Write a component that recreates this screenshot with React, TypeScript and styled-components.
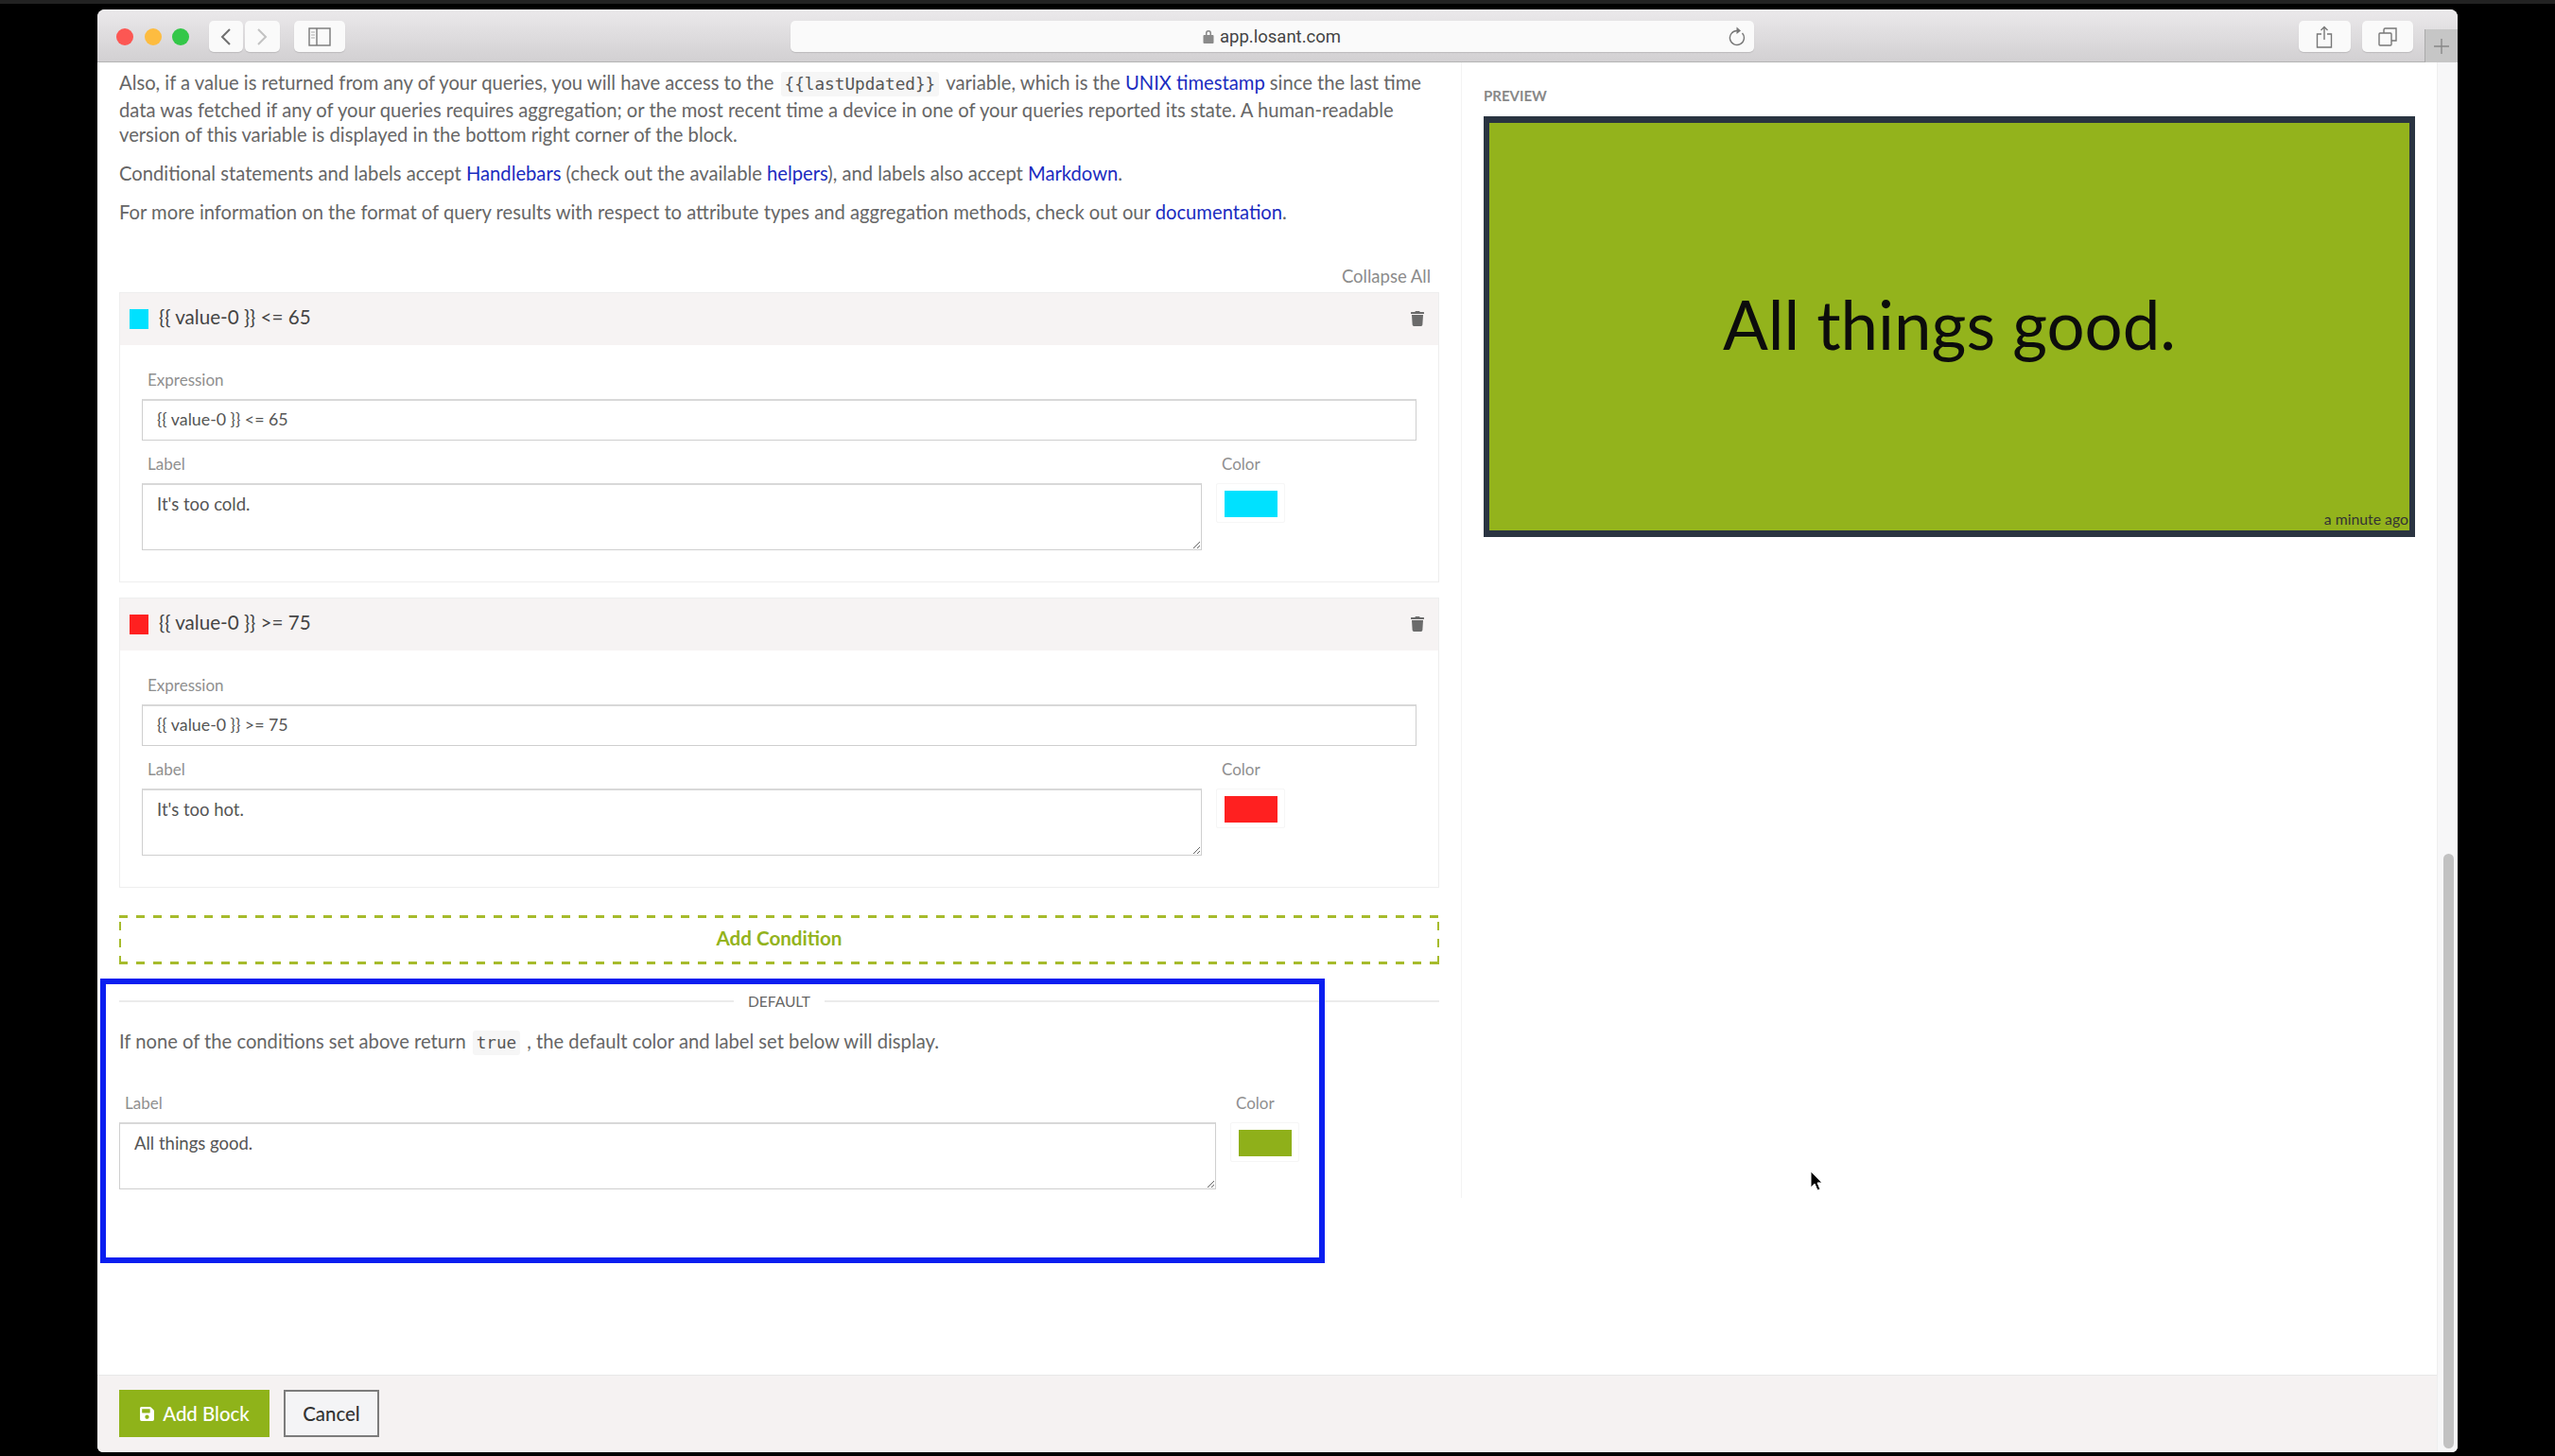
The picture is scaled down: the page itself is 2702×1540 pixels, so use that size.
import styled, { createGlobalStyle } from "styled-components";
import { FaSave, FaTrash } from "react-icons/fa";

const GlobalStyle = createGlobalStyle`
  html, body {
    margin: 0;
    padding: 0;
    background: #000;
  }
  * {
    box-sizing: border-box;
  }
`;

const Screen = styled.div`
  position: relative;
  width: 2702px;
  height: 1540px;
  overflow: hidden;
  padding: 10px 0 0 103px;
  background: #000;
  border-top: 4px solid #222;
  font-family: "Lato", "Liberation Sans", sans-serif;
`;

const Window = styled.div`
  display: flex;
  flex-direction: column;
  width: 2496px;
  height: 1526px;
  margin-top: -4px;
  background: #fff;
  border-radius: 8px 8px 6px 6px;
  overflow: hidden;
`;

const Toolbar = styled.div`
  position: relative;
  display: flex;
  align-items: flex-start;
  flex: 0 0 56px;
  padding: 12px 0 0 20px;
  background: linear-gradient(#ebe9eb, #d2d0d2);
  border-bottom: 1px solid #b4b4b4;
`;

const Lights = styled.div`
  display: flex;
  gap: 11.5px;
  margin: 8px 20.5px 0 0;
`;

const Light = styled.span<{ $color: string }>`
  width: 18px;
  height: 18px;
  border-radius: 50%;
  background: ${(p) => p.$color};
`;

const ToolButton = styled.div<{ $width: number; $gap?: number }>`
  display: flex;
  align-items: center;
  justify-content: center;
  width: ${(p) => p.$width}px;
  height: 33px;
  margin-right: ${(p) => p.$gap ?? 0}px;
  background: #fafafa;
  border-radius: 5px;
  box-shadow: 0 1px 1px rgba(0, 0, 0, 0.12);
`;

const AddressBar = styled(ToolButton)`
  position: relative;
  gap: 6px;
  color: #444;
  font-family: "Roboto", sans-serif;
  font-size: 18.5px;
  margin-left: 471px;
  margin-right: 576px;
`;

const Reload = styled.span`
  position: absolute;
  right: 9px;
  top: 5px;
  display: flex;
`;

const NewTab = styled.div`
  position: absolute;
  top: 21px;
  right: 0;
  display: flex;
  align-items: center;
  justify-content: center;
  width: 35px;
  height: 35px;
  background: #c6c6c6;
  border-left: 1px solid #aaa;
`;

const Body = styled.div`
  display: flex;
  flex: 1;
  min-height: 0;
`;

const Main = styled.div`
  display: flex;
  flex-direction: column;
  flex: 1;
  min-width: 0;
`;

const Track = styled.div`
  flex: 0 0 22px;
  padding: 837px 4px 4px 6px;
  background: #f7f7f8;
  border-left: 1px solid #eee;
`;

const Thumb = styled.div`
  height: 100%;
  background: #c2c2c2;
  border-radius: 6px;
`;

const Content = styled.div`
  display: flex;
  flex: 1;
  min-height: 0;
`;

const FormColumn = styled.div`
  flex: 0 0 1443px;
  height: 1201px;
  padding: 8px 23px 0 23px;
  border-right: 1px solid #f3f3f3;
`;

const Para = styled.p`
  margin: 0 0 14px;
  color: #666;
  font-size: 20.2px;
  line-height: 26.7px;
`;

const A = styled.span`
  color: #1b2cc0;
`;

const Code = styled.code`
  margin: 0 7px;
  padding: 3px 4px;
  background: #f6f6f6;
  border-radius: 3px;
  color: #555;
  font-family: "DejaVu Sans Mono", monospace;
  font-size: 17.7px;
`;

const CollapseRow = styled.div`
  height: 29px;
  margin-top: 42px;
  padding-right: 9px;
  color: #8b8b8b;
  font-size: 18.5px;
  line-height: 24px;
  text-align: right;
`;

const Card = styled.div`
  margin-bottom: 16px;
  border: 1px solid #eeeeee;
`;

const CardHeader = styled.div`
  display: flex;
  align-items: center;
  height: 55px;
  padding: 0 14px 0 10px;
  background: #f6f3f3;
  color: #444;
  font-size: 20.6px;
`;

const Dot = styled.span<{ $color: string }>`
  flex: 0 0 20px;
  height: 21px;
  margin-right: 11px;
  background: ${(p) => p.$color};
`;

const HeaderText = styled.span`
  flex: 1;
  margin-bottom: 5px;
`;

const TrashBtn = styled.span`
  display: flex;
  color: #6b6b6b;
  font-size: 16px;
`;

const CardBody = styled.div`
  padding: 27px 23px 33px;
`;

const FieldLabel = styled.div`
  height: 20px;
  margin-bottom: 10px;
  padding-left: 6px;
  color: #8f8f8f;
  font-size: 17px;
  line-height: 20px;
`;

const InputBox = styled.div`
  height: 44px;
  margin-bottom: 15px;
  padding: 0 15px;
  background: #fff;
  border: 1px solid #cfcfcf;
  border-top: 2px solid #d8d8d8;
  color: #555;
  font-size: 17.8px;
  line-height: 39px;
`;

const LabelRow = styled.div`
  display: flex;
`;

const LabelCol = styled.div<{ $width: number }>`
  flex: 0 0 ${(p) => p.$width}px;
`;

const AreaBox = styled.div`
  height: 71px;
  padding: 8px 15px;
  background: #fff;
  border: 1px solid #cfcfcf;
  border-top: 2px solid #d8d8d8;
  color: #555;
  font-size: 18.5px;
  line-height: 24px;
  overflow: auto;
  resize: both;
`;

const ColorCol = styled.div`
  margin-left: 21px;
`;

const ColorLabel = styled(FieldLabel)`
  padding-left: 0;
`;

const Swatch = styled.div<{ $color: string }>`
  width: 73px;
  height: 42px;
  margin: 0 0 0 -6px;
  padding: 7px 8px;
  border: 1px solid #f6f6f6;
  border-radius: 2px;
  &::after {
    content: "";
    display: block;
    width: 56px;
    height: 28px;
    background: ${(p) => p.$color};
  }
`;

const AddCondition = styled.div`
  height: 52px;
  margin-top: 29px;
  background:
    repeating-linear-gradient(90deg, #a6bb2c 0 9px, transparent 9px 18px) top / 100% 3px no-repeat,
    repeating-linear-gradient(90deg, #a6bb2c 0 9px, transparent 9px 18px) bottom / 100% 3px no-repeat,
    repeating-linear-gradient(0deg, #a6bb2c 0 9px, transparent 9px 18px) left / 2px 100% no-repeat,
    repeating-linear-gradient(0deg, #a6bb2c 0 9px, transparent 9px 18px) right / 2px 100% no-repeat;
  color: #93b31c;
  font-size: 20.6px;
  font-weight: 700;
  line-height: 48px;
  text-align: center;
`;

const DividerRow = styled.div`
  display: flex;
  align-items: center;
  gap: 15px;
  height: 24px;
  margin-top: 27px;
  color: #666;
  font-size: 15.5px;
  &::before,
  &::after {
    content: "";
    flex: 1;
    height: 2px;
    background: #ebebeb;
  }
`;

const DefaultNote = styled(Para)`
  margin: 17px 0 41px;
`;

const DefaultField = styled.div`
  display: flex;
`;

const Footer = styled.div`
  display: flex;
  align-items: flex-start;
  gap: 15px;
  flex: 0 0 82px;
  padding: 15px 0 0 23px;
  background: #f5f2f2;
  border-top: 1px solid #e8e8e8;
`;

const SaveButton = styled.div`
  display: flex;
  align-items: center;
  justify-content: center;
  gap: 8px;
  width: 159px;
  height: 50px;
  background: #8fb31a;
  color: #fff;
  font-size: 20.4px;
  font-weight: 500;
`;

const CancelButton = styled.div`
  display: flex;
  align-items: center;
  justify-content: center;
  width: 101px;
  height: 50px;
  background: #f4f4f6;
  border: 2px solid #7c7c7c;
  color: #333;
  font-size: 20.4px;
  font-weight: 500;
`;

const PreviewColumn = styled.div`
  flex: 1;
  padding: 26px 0 0 23px;
`;

const PreviewTitle = styled.div`
  height: 31px;
  color: #888;
  font-size: 15px;
  font-weight: 700;
  line-height: 18px;
  text-transform: uppercase;
`;

const PreviewBox = styled.div`
  position: relative;
  display: flex;
  align-items: center;
  justify-content: center;
  width: 985px;
  height: 445px;
  padding-bottom: 6px;
  background: #93b31c;
  border: 6px solid #2a3441;
  border-top-width: 7px;
  border-bottom-width: 7px;
  color: #0c0c0c;
  font-size: 70.8px;
`;

const Stamp = styled.span`
  position: absolute;
  right: 1px;
  bottom: 3px;
  color: #333;
  font-size: 15.8px;
`;

const Highlight = styled.div`
  position: absolute;
  left: 106px;
  top: 1031px;
  width: 1295px;
  height: 301px;
  border: 6px solid #0a1ef0;
  pointer-events: none;
`;

const Cursor = styled.svg`
  position: absolute;
  left: 1914px;
  top: 1234px;
`;

const conditions = [
  { expr: "{{ value-0 }} <= 65", label: "It's too cold.", color: "#00e1ff" },
  { expr: "{{ value-0 }} >= 75", label: "It's too hot.", color: "#ff2020" },
];

const App = () => {
  return (
    <>
      <GlobalStyle />
      <Screen>
        <Window>
          <Toolbar>
            <Lights>
              <Light $color="#fc5753" />
              <Light $color="#fdbc40" />
              <Light $color="#33c748" />
            </Lights>
            <ToolButton $width={36} $gap={2}>
              <svg width="14" height="20" viewBox="0 0 14 20" fill="none" stroke="#6f6f6f" strokeWidth="2">
                <path d="M11 2 3 10l8 8" />
              </svg>
            </ToolButton>
            <ToolButton $width={37} $gap={15}>
              <svg width="14" height="20" viewBox="0 0 14 20" fill="none" stroke="#c2c2c2" strokeWidth="2">
                <path d="m3 2 8 8-8 8" />
              </svg>
            </ToolButton>
            <ToolButton $width={54}>
              <svg width="24" height="20" viewBox="0 0 24 20" fill="none" stroke="#777" strokeWidth="1.4">
                <rect x="1" y="1" width="22" height="18" />
                <path d="M9 1v18" />
                <path d="M3 5h4M3 8h4M3 11h4" strokeWidth="1" stroke="#aaa" />
              </svg>
            </ToolButton>
            <AddressBar $width={1019}>
              <svg width="12" height="15" viewBox="0 0 12 15" fill="#8a8a8a">
                <path d="M3 6V4a3 3 0 0 1 6 0v2h-1.5V4a1.5 1.5 0 0 0-3 0v2z" />
                <rect x="0.5" y="6" width="11" height="9" rx="1" />
              </svg>
              app.losant.com
              <Reload>
                <svg width="18" height="22" viewBox="0 0 18 22" fill="none" stroke="#777" strokeWidth="1.4">
                  <path d="M14.5 8a7.5 7.5 0 1 1-5.5-2.5" />
                  <path d="M8.5 1.5 13 5.5 8.5 9z" fill="#777" stroke="none" />
                </svg>
              </Reload>
            </AddressBar>
            <ToolButton $width={55} $gap={12}>
              <svg width="18" height="24" viewBox="0 0 18 24" fill="none" stroke="#777" strokeWidth="1.4">
                <path d="M6 9H1.5v14h15V9H12" />
                <path d="M9 15V1.5M5.5 5 9 1.5 12.5 5" />
              </svg>
            </ToolButton>
            <ToolButton $width={54}>
              <svg width="20" height="20" viewBox="0 0 20 20" fill="none" stroke="#777" strokeWidth="1.4">
                <rect x="1" y="6" width="13" height="13" rx="1" />
                <path d="M6 6V2.5A1.5 1.5 0 0 1 7.5 1H19v13h-5" />
              </svg>
            </ToolButton>
            <NewTab>
              <svg width="16" height="16" viewBox="0 0 16 16" stroke="#888" strokeWidth="1.4">
                <path d="M8 0v16M0 8h16" />
              </svg>
            </NewTab>
          </Toolbar>
          <Body>
            <Main>
              <Content>
                <FormColumn>
                  <Para>
                    Also, if a value is returned from any of your queries, you will have access to the
                    <Code>{"{{lastUpdated}}"}</Code>
                    variable, which is the <A>UNIX timestamp</A> since the last time
                    <br />
                    data was fetched if any of your queries requires aggregation; or the most recent time a device in one of your queries reported its state. A human-readable
                    <br />
                    version of this variable is displayed in the bottom right corner of the block.
                  </Para>
                  <Para>
                    Conditional statements and labels accept <A>Handlebars</A> (check out the available <A>helpers</A>), and labels also accept <A>Markdown</A>.
                  </Para>
                  <Para>
                    For more information on the format of query results with respect to attribute types and aggregation methods, check out our <A>documentation</A>.
                  </Para>
                  <CollapseRow>Collapse All</CollapseRow>
                  {conditions.map((c) => (
                    <Card key={c.color}>
                      <CardHeader>
                        <Dot $color={c.color} />
                        <HeaderText>{c.expr}</HeaderText>
                        <TrashBtn>
                          <FaTrash />
                        </TrashBtn>
                      </CardHeader>
                      <CardBody>
                        <FieldLabel>Expression</FieldLabel>
                        <InputBox>{c.expr}</InputBox>
                        <LabelRow>
                          <LabelCol $width={1121}>
                            <FieldLabel>Label</FieldLabel>
                            <AreaBox>{c.label}</AreaBox>
                          </LabelCol>
                          <ColorCol>
                            <ColorLabel>Color</ColorLabel>
                            <Swatch $color={c.color} />
                          </ColorCol>
                        </LabelRow>
                      </CardBody>
                    </Card>
                  ))}
                  <AddCondition>Add Condition</AddCondition>
                  <DividerRow>DEFAULT</DividerRow>
                  <DefaultNote>
                    If none of the conditions set above return
                    <Code>true</Code>, the default color and label set below will display.
                  </DefaultNote>
                  <DefaultField>
                    <LabelCol $width={1160}>
                      <FieldLabel>Label</FieldLabel>
                      <AreaBox>All things good.</AreaBox>
                    </LabelCol>
                    <ColorCol>
                      <ColorLabel>Color</ColorLabel>
                      <Swatch $color="#8fb01a" />
                    </ColorCol>
                  </DefaultField>
                </FormColumn>
                <PreviewColumn>
                  <PreviewTitle>Preview</PreviewTitle>
                  <PreviewBox>
                    All things good.
                    <Stamp>a minute ago</Stamp>
                  </PreviewBox>
                </PreviewColumn>
              </Content>
              <Footer>
                <SaveButton>
                  <FaSave size={17} />
                  Add Block
                </SaveButton>
                <CancelButton>Cancel</CancelButton>
              </Footer>
            </Main>
            <Track>
              <Thumb />
            </Track>
          </Body>
        </Window>
        <Highlight />
        <Cursor width="14" height="24" viewBox="0 0 14 24">
          <path d="M1 1v17l4-4 3 7 3-1-3-7h5z" fill="#000" stroke="#fff" strokeWidth="1" />
        </Cursor>
      </Screen>
    </>
  );
};

export default App;
